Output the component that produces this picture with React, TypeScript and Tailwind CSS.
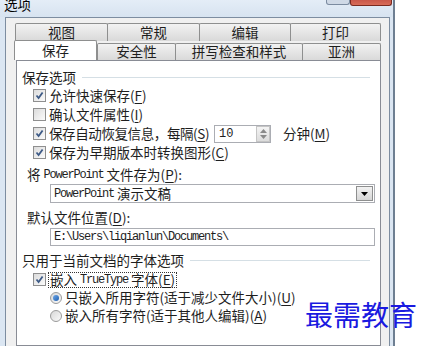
import React from "react";

const CJK = { fontFamily: '"Noto Sans CJK SC", "Noto Sans", sans-serif' };
const MONO = { fontFamily: '"Liberation Mono", "Noto Sans CJK SC", monospace' };

function U({ c }: { c: string }) {
  return (
    <span>
      (<span className="underline underline-offset-2">{c}</span>)
    </span>
  );
}

function Check({ on }: { on: boolean }) {
  return (
    <span className="flex h-[13px] w-[13px] shrink-0 items-center justify-center border border-[#8f8f8f] bg-gradient-to-br from-[#dcdcdc] to-[#fbfbfb]">
      {on && (
        <svg width="9" height="9" viewBox="0 0 9 9">
          <path d="M1.5 4.5 L3.6 7 L7.6 1.5" fill="none" stroke="#3d5a86" strokeWidth="1.8" />
        </svg>
      )}
    </span>
  );
}

function Radio({ on }: { on: boolean }) {
  return (
    <span className="flex h-[12px] w-[12px] shrink-0 items-center justify-center rounded-full border border-[#9a9a9a] bg-gradient-to-br from-[#d8d8d8] to-[#fafafa]">
      {on && <span className="h-[6px] w-[6px] rounded-full bg-gradient-to-br from-[#6fa8e8] to-[#1d5fb0]" />}
    </span>
  );
}

function Group({ title }: { title: string }) {
  return (
    <div className="flex h-[17px] items-center gap-[6px]">
      <span className="text-[13.5px] leading-none text-[#1e1e1e]">{title}</span>
      <span className="mr-[5px] h-px flex-1 border-t border-[#d5dfe5]" />
    </div>
  );
}

function CheckRow({ on, children }: { on: boolean; children: React.ReactNode }) {
  return (
    <div className="flex h-[19px] items-center gap-[3px] whitespace-nowrap pl-[11px] text-[13.5px] leading-none text-[#1e1e1e]">
      <Check on={on} />
      {children}
    </div>
  );
}

function Tab({ w, label }: { w: string; label: string }) {
  return (
    <div
      className={`${w} flex h-full items-center justify-center rounded-t-[2px] border border-b-0 border-[#8e8f8f] bg-gradient-to-b from-[#f2f2f2] to-[#d9d9d9] text-[13.5px] leading-none text-[#1e1e1e] -ml-px first:ml-0`}
    >
      {label}
    </div>
  );
}

export default function App() {
  return (
    <div className="relative h-[346px] w-[427px] overflow-hidden bg-white" style={CJK}>
      {/* window */}
      <div className="flex h-full w-[395px] flex-col border-r-[2px] border-[#6e7f92] bg-[#dbe6f2]">
        {/* title bar */}
        <div className="flex h-[17px] shrink-0 items-start bg-gradient-to-b from-[#e4edf7] to-[#d7e3f0]">
          <span className="-mt-[4px] ml-[4px] text-[13.5px] leading-[16px] text-black">选项</span>
          <div className="ml-auto mr-[1px] flex items-start">
            <span className="h-[5px] w-[24px] rounded-b-[3px] border border-t-0 border-[#7b8ba0] bg-[#cfd9e6]" />
            <span className="h-[6px] w-[42px] rounded-b-[3px] border border-t-0 border-[#7a2a20] bg-gradient-to-b from-[#c9584a] to-[#d86c58]" />
          </div>
        </div>
        {/* client area */}
        <div className="ml-[5px] mr-[3px] flex flex-1 flex-col border-l border-r border-t border-[#7d8da0] bg-[#f0f0f0] pl-[8px] pr-[8px] pt-[5px]">
          {/* back tab row */}
          <div className="flex h-[18px] pl-[1px]">
            <Tab w="w-[93px]" label="视图" />
            <Tab w="w-[93px]" label="常规" />
            <Tab w="w-[92px]" label="编辑" />
            <Tab w="w-[91px]" label="打印" />
          </div>
          {/* front tab row */}
          <div className="relative z-10 flex h-[19px] items-end">
            <div className="flex h-[20px] w-[86px] items-center justify-center rounded-t-[2px] border border-b-0 border-[#8e8f8f] bg-white text-[13.5px] leading-none text-[#1e1e1e]">
              保存
            </div>
            <div className="flex h-[17px]">
              <Tab w="w-[79px]" label="安全性" />
              <Tab w="w-[128px]" label="拼写检查和样式" />
              <Tab w="w-[79px]" label="亚洲" />
            </div>
          </div>
          {/* panel */}
          <div className="ml-[2px] flex flex-1 flex-col border border-[#898c95] bg-white pl-[5px] pr-[5px] pt-[8px]">
            <Group title="保存选项" />
            <CheckRow on>
              <span>
                允许快速保存<U c="F" />
              </span>
            </CheckRow>
            <CheckRow on={false}>
              <span>
                确认文件属性<U c="I" />
              </span>
            </CheckRow>
            <CheckRow on>
              <span className="w-[162px] shrink-0 tracking-[-0.4px]">
                保存自动恢复信息，每隔<U c="S" />
              </span>
              <div className="flex h-[18px] w-[57px] shrink-0 items-center border border-[#abadb3] bg-white">
                <span className="flex-1 pl-[4px] text-[12px] leading-none" style={MONO}>
                  10
                </span>
                <span className="flex h-[16px] w-[14px] flex-col items-center justify-center gap-[2px] border border-[#c5c5c5] bg-gradient-to-b from-[#f4f4f4] to-[#dcdcdc]">
                  <svg width="7" height="4" viewBox="0 0 7 4">
                    <path d="M0 4 L3.5 0 L7 4 Z" fill="#8a8a8a" />
                  </svg>
                  <svg width="7" height="4" viewBox="0 0 7 4">
                    <path d="M0 0 L3.5 4 L7 0 Z" fill="#8a8a8a" />
                  </svg>
                </span>
              </div>
              <span className="ml-[9px]">
                分钟<U c="M" />
              </span>
            </CheckRow>
            <CheckRow on>
              <span>
                保存为早期版本时转换图形<U c="C" />
              </span>
            </CheckRow>

            <div className="mt-[5px] flex h-[16px] items-center whitespace-nowrap pl-[5px] text-[13.5px] leading-none text-[#1e1e1e]">
              将&nbsp;
              <span className="text-[12px] tracking-[-1.2px]" style={MONO}>
                PowerPoint
              </span>
              &nbsp;文件存为<U c="P" />:
            </div>
            <div className="ml-[28px] mt-[1px] flex h-[19px] items-center border border-[#abadb3] bg-white">
              <span className="flex flex-1 items-center pl-[3px] text-[13.5px] leading-none text-[#1e1e1e]">
                <span className="text-[12px] tracking-[-1.2px]" style={MONO}>
                  PowerPoint
                </span>
                &nbsp;演示文稿
              </span>
              <span className="mr-[1px] flex h-[15px] w-[17px] items-center justify-center border border-[#8e8f8f] bg-gradient-to-b from-[#f2f2f2] to-[#d6d6d6]">
                <svg width="7" height="4" viewBox="0 0 7 4">
                  <path d="M0 0 L7 0 L3.5 4 Z" fill="#000" />
                </svg>
              </span>
            </div>

            <div className="mt-[7px] flex h-[16px] items-center pl-[5px] text-[13.5px] leading-none text-[#1e1e1e]">
              默认文件位置<U c="D" />:
            </div>
            <div className="ml-[28px] mt-[2px] flex h-[18px] items-center border border-[#abadb3] bg-white pl-[3px]">
              <span className="text-[12px] leading-none tracking-[-1.2px] text-[#1e1e1e]" style={MONO}>
                E:\Users\liqianlun\Documents\
              </span>
            </div>

            <div className="mt-[6px]">
              <Group title="只用于当前文档的字体选项" />
            </div>
            <div className="mt-[1px] flex h-[19px] items-center gap-[2px] pl-[11px] text-[13.5px] leading-none text-[#1e1e1e]">
              <Check on />
              <span className="flex h-[16px] items-center border border-dotted border-[#333] px-[1px]">
                嵌入&nbsp;
                <span className="text-[12px] tracking-[-1.2px]" style={MONO}>
                  TrueType
                </span>
                &nbsp;字体<U c="E" />
              </span>
            </div>
            <div className="flex h-[18px] items-center gap-[3px] pl-[28px] text-[13.5px] leading-none text-[#1e1e1e]">
              <Radio on />
              <span>
                只嵌入所用字符(适于减少文件大小)<U c="U" />
              </span>
            </div>
            <div className="flex h-[17px] items-center gap-[3px] pl-[28px] text-[13.5px] leading-none text-[#1e1e1e]">
              <Radio on={false} />
              <span>
                嵌入所有字符(适于其他人编辑)<U c="A" />
              </span>
            </div>
          </div>
        </div>
      </div>
      {/* watermark */}
      <div className="absolute left-[305px] top-[297px] text-[28px] leading-[34px] text-[#1a1ae0]">
        最需教育
      </div>
    </div>
  );
}
